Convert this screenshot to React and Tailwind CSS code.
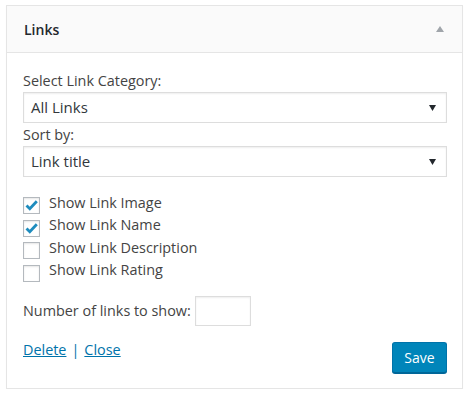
const rows = [
  { label: "Show Link Image", checked: true },
  { label: "Show Link Name", checked: true },
  { label: "Show Link Description", checked: false },
  { label: "Show Link Rating", checked: false },
];

const Caret = () => (
  <svg width="7" height="6" viewBox="0 0 7 6" className="shrink-0">
    <path d="M0 0 H7 L3.5 6 Z" fill="#23282d" />
  </svg>
);

const Select = ({ value }) => (
  <div className="mt-px flex h-[31px] w-[424px] items-center justify-between border border-[#dddddd] bg-white pl-[7px] pr-[10px] text-[15px] text-[#32373c] shadow-[inset_0_1px_2px_rgba(0,0,0,0.07)]">
    <span>{value}</span>
    <Caret />
  </div>
);

const Checkbox = ({ checked }) => (
  <span className="flex h-[17px] w-[17px] shrink-0 items-center justify-center border border-[#b4b9be] bg-white shadow-[inset_0_1px_2px_rgba(0,0,0,0.1)]">
    {checked && (
      <svg width="13" height="11" viewBox="0 0 13 11">
        <path
          d="M1.5 5.5 L4.8 8.8 L11.8 1.3"
          fill="none"
          stroke="#1e8cbe"
          strokeWidth="2.8"
          strokeLinejoin="miter"
        />
      </svg>
    )}
  </span>
);

export default function App() {
  return (
    <div className="px-[6px] pt-[5px] font-['Open_Sans',sans-serif] text-[14.4px] text-[#444444]">
      <div className="border border-[#e5e5e5] bg-white shadow-[0_1px_1px_rgba(0,0,0,0.04)]">
        <div className="flex h-[47px] items-center justify-between border-b border-[#e5e5e5] bg-[#fafafa] pl-[17px] pr-[18px]">
          <span className="text-[14px] font-semibold text-[#23282d]">Links</span>
          <svg width="8" height="6" viewBox="0 0 8 6">
            <path d="M0 6 H8 L4 0 Z" fill="#a0a5aa" />
          </svg>
        </div>

        <div className="pb-[15px] pl-[16px] pr-[15px] pt-[18px]">
          <div className="leading-[20px]">Select Link Category:</div>
          <Select value="All Links" />

          <div className="mt-[2px] leading-[20px]">Sort by:</div>
          <Select value="Link title" />

          <div className="mt-[17.5px] flex flex-col">
            {rows.map(({ label, checked }) => (
              <label key={label} className="flex h-[22.5px] items-center gap-[9px]">
                <Checkbox checked={checked} />
                <span className="-mt-[6px] leading-[20px]">{label}</span>
              </label>
            ))}
          </div>

          <div className="mt-[11.5px] flex items-center gap-[4px]">
            <span>Number of links to show:</span>
            <span className="h-[30px] w-[56px] border border-[#dddddd] bg-white shadow-[inset_0_1px_2px_rgba(0,0,0,0.07)]" />
          </div>

          <div className="mt-[15.5px] flex items-start justify-between">
            <div className="-mt-px leading-[18px]">
              <a href="#" className="text-[#0073aa] underline">Delete</a>
              <span className="mx-[5px] text-[#0073aa]">|</span>
              <a href="#" className="text-[#0073aa] underline">Close</a>
            </div>
            <button className="h-[31px] w-[55px] rounded-[3px] border border-[#0073aa] border-b-[#006799] bg-[#0085ba] text-[14px] text-white shadow-[0_1px_0_#006799]">
              Save
            </button>
          </div>
        </div>
      </div>
    </div>
  );
}
